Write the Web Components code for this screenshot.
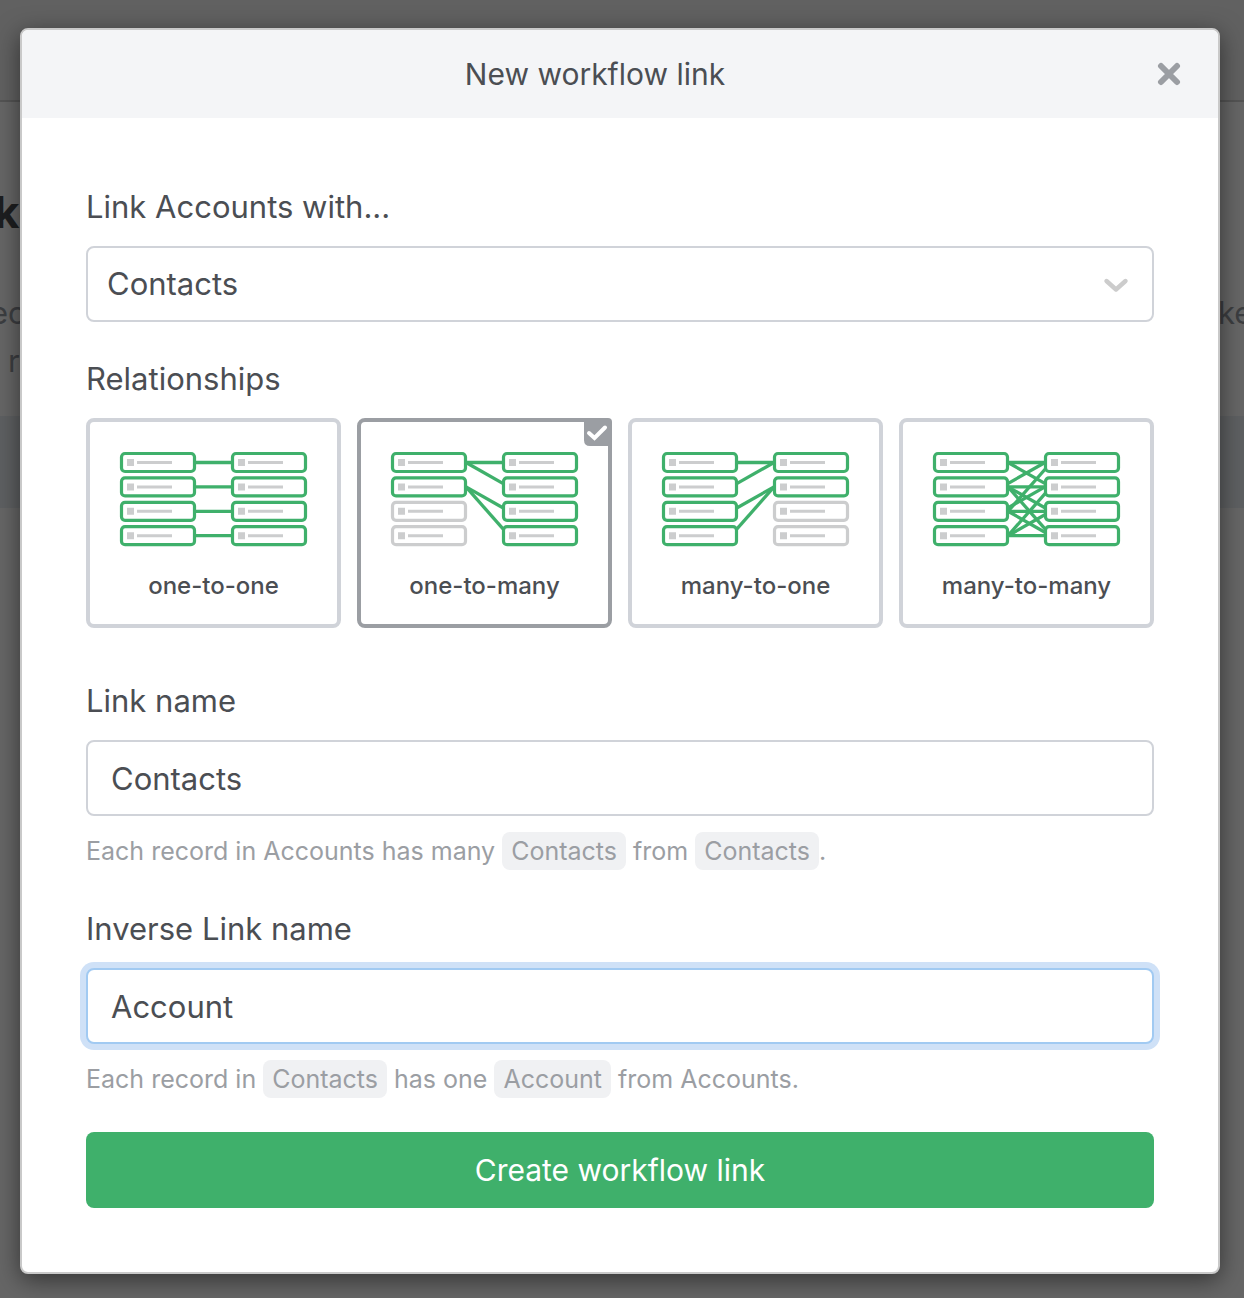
<!DOCTYPE html>
<html lang="en">
<head>
<meta charset="utf-8">
<meta name="viewport" content="width=device-width, initial-scale=1">
<title>New workflow link</title>
<style>
  html, body { margin: 0; min-height: 100%; }
  body {
    --ink: #4b4e53;
    --muted: #9b9ea3;
    --line: #d0d3d9;
    --green: #3fb06b;
    background: #666;
    color: var(--ink);
    font-family: Inter, "Noto Sans", sans-serif;
    font-size: 31px;
    line-height: 50px;
    display: grid;
    overflow-x: hidden;
  }
  body > * { grid-area: 1 / 1; min-width: 0; }
</style>
</head>
<body>
<page-backdrop></page-backdrop>
<modal-dialog heading="New workflow link">
  <select-field label="Link Accounts with..." options="Contacts,Accounts,Deals"></select-field>
  <relationship-picker label="Relationships" value="one-to-many"></relationship-picker>
  <text-field label="Link name" value="Contacts">
    Each record in Accounts has many <name-chip>Contacts</name-chip> from <name-chip>Contacts</name-chip>.
  </text-field>
  <text-field label="Inverse Link name" value="Account" active>
    Each record in <name-chip>Contacts</name-chip> has one <name-chip>Account</name-chip> from Accounts.
  </text-field>
  <action-button>Create workflow link</action-button>
</modal-dialog>

<script>
const define = (name, render) => customElements.define(name, class extends HTMLElement {
  connectedCallback() {
    if (this.shadowRoot) return;
    this.attachShadow({ mode: 'open' }).innerHTML =
      '<style>*{box-sizing:border-box}:host{box-sizing:border-box;display:block}</style>' + render(this);
  }
});

define('page-backdrop', () => `
  <style>
    :host { overflow: hidden; color: #3c3e41; line-height: 48px; }
    header { height: 102px; background: #616161; border-bottom: 2px solid #545454; }
    h1 { margin: 80px 0 0 -6px; font-size: 44px; line-height: 60px; font-weight: 700; color: #1d1e20; }
    .copy { display: flex; justify-content: space-between; margin: 47px 0 0 -10px; }
    .copy span { width: 26px; white-space: nowrap; }
    .next { padding-left: 8px; }
    .band { height: 92px; margin-top: 31px; background: #5e6062; }
  </style>
  <header></header>
  <h1>ke</h1>
  <div class="copy"><span>ec</span><span>ke</span></div>
  <div class="next">r</div>
  <div class="band"></div>`);

define('modal-dialog', el => `
  <style>
    :host { margin: 28px 24px 24px 20px; z-index: 1; align-self: start; }
    section {
      border: 2px solid #c9c9c9; border-radius: 8px; background: #fff; overflow: hidden;
      box-shadow: 0 6px 24px rgba(0,0,0,.5);
    }
    header { display: flex; align-items: center; height: 88px; padding: 0 24px; background: #f4f5f7; }
    h2 { flex: 1; margin: 0; text-align: center; font: inherit; font-size: 30px; }
    button { display: grid; place-items: center; width: 50px; height: 50px; padding: 0; border: 0; background: none; cursor: pointer; }
    form { display: flex; flex-direction: column; gap: 32px; padding: 64px; }
  </style>
  <section role="dialog" aria-modal="true" aria-labelledby="title">
    <header>
      <h2 id="title">${el.getAttribute('heading')}</h2>
      <button type="button" aria-label="Close">
        <svg width="24" height="24" viewBox="0 0 24 24" fill="none" stroke="#9b9ea3" stroke-width="6" stroke-linecap="round"><path d="M4 4L20 20M20 4L4 20"/></svg>
      </button>
    </header>
    <form><slot></slot></form>
  </section>`);

define('select-field', el => `
  <style>
    label { display: block; margin-bottom: 14px; }
    .box { display: grid; align-items: center; }
    .box > * { grid-area: 1 / 1; }
    select {
      appearance: none; width: 100%; height: 76px; padding: 0 64px 0 19px; margin: 0;
      border: 2px solid var(--line); border-radius: 8px; background: #fff; color: inherit; font: inherit;
    }
    svg { justify-self: end; margin-right: 24px; pointer-events: none; }
  </style>
  <label for="control">${el.getAttribute('label')}</label>
  <div class="box">
    <select id="control">${el.getAttribute('options').split(',').map(o => `<option>${o}</option>`).join('')}</select>
    <svg width="28" height="18" viewBox="0 0 28 18" fill="none" stroke="#cccccc" stroke-width="4.4" stroke-linecap="round" stroke-linejoin="round"><path d="M4.5 6L14 14.5L23.5 6"/></svg>
  </div>`);

define('text-field', el => `
  <style>
    label { display: block; margin-bottom: 14px; }
    input {
      display: block; width: 100%; height: 76px; padding: 0 23px; margin: 0;
      border: 2px solid var(--line); border-radius: 8px; background: #fff; color: inherit; font: inherit; outline: none;
    }
    :host([active]) input, input:focus { border-color: #a1caf2; box-shadow: 0 0 0 6px #cfe1f7; }
    p { margin: 14px 0 0; font-size: 25px; line-height: 42px; color: var(--muted); }
  </style>
  <label for="control">${el.getAttribute('label')}</label>
  <input id="control" type="text" value="${el.getAttribute('value')}" aria-describedby="hint">
  <p id="hint"><slot></slot></p>`);

define('name-chip', () => `
  <style>
    :host { display: inline-block; padding: 0 9px; border-radius: 8px; background: #f0f1f3; line-height: 38px; }
  </style><slot></slot>`);

define('action-button', () => `
  <style>
    button { display: block; width: 100%; height: 76px; border: 0; border-radius: 8px; background: var(--green); color: #fff; font: inherit; font-size: 30px; cursor: pointer; }
  </style>
  <button type="button"><slot></slot></button>`);

/* Row pairs joined in each diagram, numbered from the top.
   A third entry makes a rising line leave from the left box's edge. */
const LINKS = {
  'one-to-one': [[0,0],[1,1],[2,2],[3,3]],
  'one-to-many': [[0,0],[0,1],[1,2],[1,3]],
  'many-to-one': [[0,0],[1,0],[2,1],[3,1]],
  'many-to-many': [[0,0],[0,1],[1,0],[1,1],[1,2],[1,3],[2,0,1],[2,1],[2,2],[2,3],[3,1,1],[3,2,1],[3,3]]
};

define('link-diagram', el => {
  const links = LINKS[el.getAttribute('type')];
  const mid = row => 10.5 + row * 24.4;
  const lines = links.map(([a, b, edge]) => {
    const x = b < a && !edge ? 69 : 75;
    return `<path d="M${x} ${mid(a)}L${x + 43} ${mid(b)}"/>`;
  }).join('');
  const boxes = [0, 1].map(side => [0, 1, 2, 3].map(row => {
    const on = links.some(pair => pair[side] === row);
    const x = side * 111, y = row * 24.4;
    return `<rect x="${x + 1.5}" y="${y + 1.5}" width="73" height="18" rx="3.5" fill="#fff" stroke="${on ? '#3fb06b' : '#cccdce'}" stroke-width="3.2"/>
      <path d="M${x + 7} ${y + 7}h7v7h-7zM${x + 17} ${y + 9}h35v3h-35z" fill="#cccdce"/>`;
  }).join('')).join('');
  return `<style>svg { display: block; width: 100%; overflow: visible; }</style>
    <svg viewBox="0 0 187 95" aria-hidden="true"><g stroke="#3fb06b" stroke-width="3.3">${lines}</g>${boxes}</svg>`;
});

define('relationship-picker', el => `
  <style>
    :host { margin-bottom: 16px; }
    fieldset { margin: 0; padding: 0; border: 0; min-width: 0; }
    legend { padding: 0; margin-bottom: 14px; }
    .cards { display: grid; grid-template-columns: repeat(4, minmax(0, 1fr)); gap: 16px; }
    label {
      position: relative; height: 210px; padding: 30px 30px 0; border: 4px solid var(--line); border-radius: 8px;
      text-align: center; font-size: 24px; font-weight: 500; line-height: 32px; cursor: pointer;
    }
    span { display: block; margin: 23px -24px 0; white-space: nowrap; }
    input { position: absolute; opacity: 0; margin: 0; }
    .tick { display: none; position: absolute; top: -4px; right: -4px; }
    label:has(input:checked) { border-color: var(--muted); }
    label:has(input:checked) .tick { display: block; }
  </style>
  <fieldset>
    <legend>${el.getAttribute('label')}</legend>
    <div class="cards">${Object.keys(LINKS).map(type => `
      <label>
        <input type="radio" name="relationship" value="${type}"${type === el.getAttribute('value') ? ' checked' : ''}>
        <link-diagram type="${type}"></link-diagram>
        <span>${type}</span>
        <svg class="tick" width="28" height="28" viewBox="0 0 28 28" fill="none" aria-hidden="true">
          <path d="M0 0H24Q28 0 28 4V28H6Q0 28 0 22Z" fill="#9b9ea3"/>
          <path d="M5 15L10.5 20L21 9.5" stroke="#fff" stroke-width="4" stroke-linecap="round" stroke-linejoin="miter"/>
        </svg>
      </label>`).join('')}
    </div>
  </fieldset>`);
</script>
</body>
</html>
